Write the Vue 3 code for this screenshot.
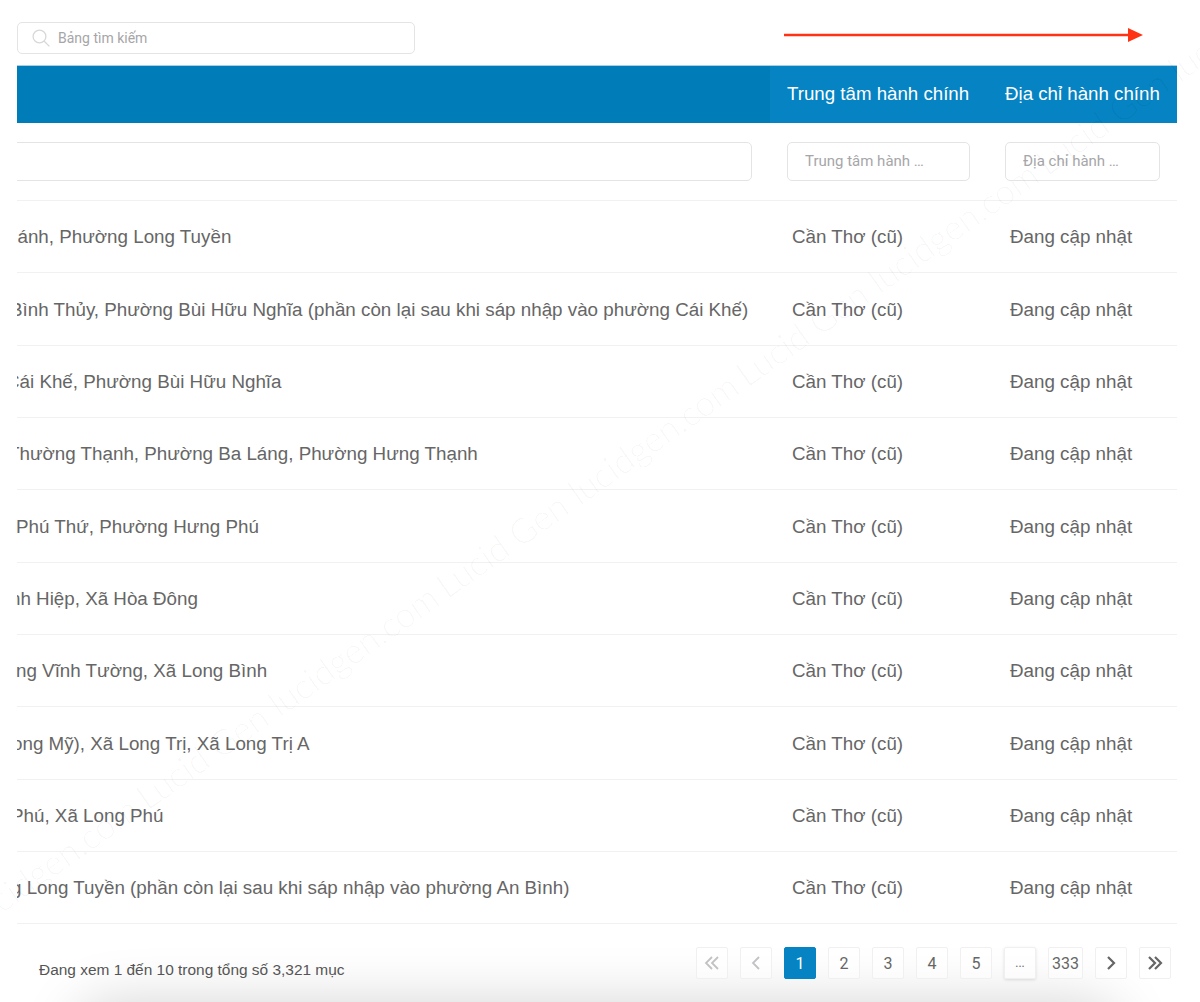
<template>
  <div class="page">
    <div class="toolbar">
      <label class="search">
        <svg class="search-icon" viewBox="0 0 18 18" width="18" height="18" fill="none">
          <circle cx="7.5" cy="7.5" r="6.4" stroke="#d8d8d8" stroke-width="1.3" />
          <line x1="12" y1="12" x2="17.4" y2="17.4" stroke="#d8d8d8" stroke-width="1.3" />
        </svg>
        <input type="text" placeholder="Bảng tìm kiếm" />
      </label>
      <svg class="arrow" viewBox="0 0 360 16" width="360" height="16">
        <line x1="0" y1="8" x2="346" y2="8" stroke="#ff3314" stroke-width="2.5" />
        <polygon points="344,1 359,8 344,15" fill="#ff3314" />
      </svg>
    </div>

    <div class="table">
      <div class="row head">
        <div class="cell first"></div>
        <div class="cell">Trung tâm hành chính</div>
        <div class="cell">Địa chỉ hành chính</div>
      </div>
      <div class="row filters">
        <div class="cell first">
          <input class="filter wide" type="text" />
        </div>
        <div class="cell"><input class="filter" type="text" placeholder="Trung tâm hành …" /></div>
        <div class="cell"><input class="filter" type="text" placeholder="Địa chỉ hành …" /></div>
      </div>
      <div v-for="item in rows" :key="item.text" class="row body">
        <div class="cell first">
          <span class="clip" :style="{ marginLeft: item.offset + 'px' }">{{ item.text }}</span>
        </div>
        <div class="cell">Cần Thơ (cũ)</div>
        <div class="cell">Đang cập nhật</div>
      </div>
    </div>

    <div class="footer">
      <div class="info">Đang xem 1 đến 10 trong tổng số 3,321 mục</div>
      <div class="pager">
        <button class="pg muted">
          <svg viewBox="0 0 16 16" width="16" height="16" fill="none" stroke="currentColor" stroke-width="1.8">
            <path d="M8 2 2 8l6 6M14 2 8 8l6 6" />
          </svg>
        </button>
        <button class="pg muted">
          <svg viewBox="0 0 16 16" width="16" height="16" fill="none" stroke="currentColor" stroke-width="1.8">
            <path d="M11 2 5 8l6 6" />
          </svg>
        </button>
        <button class="pg active">1</button>
        <button v-for="n in [2, 3, 4, 5]" :key="n" class="pg">{{ n }}</button>
        <button class="pg dots">...</button>
        <button class="pg last">333</button>
        <button class="pg">
          <svg viewBox="0 0 16 16" width="16" height="16" fill="none" stroke="currentColor" stroke-width="2.2">
            <path d="M5 2l6 6-6 6" />
          </svg>
        </button>
        <button class="pg">
          <svg viewBox="0 0 16 16" width="16" height="16" fill="none" stroke="currentColor" stroke-width="2.2">
            <path d="M2 2l6 6-6 6M8 2l6 6-6 6" />
          </svg>
        </button>
      </div>
    </div>

    <div class="bottom-shade"></div>

    <!-- watermark lies over everything -->
    <div class="watermark">
      <template v-for="n in 5" :key="n">
        <span class="mark-a">lucidgen.com</span>
        <span class="mark-b">Lucid Gen</span>
      </template>
    </div>
  </div>
</template>

<script setup>
const rows = [
  { text: 'hánh, Phường Long Tuyền', offset: -10 },
  { text: 'Bình Thủy, Phường Bùi Hữu Nghĩa (phần còn lại sau khi sáp nhập vào phường Cái Khế)', offset: -7 },
  { text: 'Cái Khế, Phường Bùi Hữu Nghĩa', offset: -11 },
  { text: 'Thường Thạnh, Phường Ba Láng, Phường Hưng Thạnh', offset: -9 },
  { text: 'Phú Thứ, Phường Hưng Phú', offset: -1 },
  { text: 'nh Hiệp, Xã Hòa Đông', offset: -7 },
  { text: 'ng Vĩnh Tường, Xã Long Bình', offset: -1 },
  { text: 'ong Mỹ), Xã Long Trị, Xã Long Trị A', offset: -5 },
  { text: 'Phú, Xã Long Phú', offset: -6 },
  { text: 'g Long Tuyền (phần còn lại sau khi sáp nhập vào phường An Bình)', offset: -6 },
]
</script>

<style>
html,
body {
  background: #fff;
}
</style>

<style scoped>
.page {
  position: relative;
  width: 1200px;
  height: 1002px;
  overflow: hidden;
  background: #fff;
  font-family: "Liberation Sans", Arial, sans-serif;
  color: #666;
}

.toolbar {
  height: 66px;
  box-sizing: border-box;
  padding: 22px 56px 0 17px;
  display: flex;
  justify-content: space-between;
  align-items: flex-start;
}

.search {
  width: 398px;
  height: 32px;
  box-sizing: border-box;
  border: 1.5px solid #e4e4e4;
  border-radius: 5px;
  display: flex;
  align-items: center;
  padding-left: 14px;
  gap: 8px;
}

.search input {
  flex: 1;
  min-width: 0;
  border: 0;
  outline: 0;
  padding: 0;
  background: transparent;
  font: 14px Roboto, sans-serif;
}

.search input::placeholder,
.filter::placeholder {
  color: #a6a6a8;
  opacity: 1;
}

.arrow {
  margin-top: 5px;
}

.table {
  width: 1160px;
  margin-left: 17px;
}

.row {
  display: grid;
  grid-template-columns: 753px 218px 189px;
}

.cell {
  display: flex;
  align-items: center;
  min-width: 0;
  white-space: nowrap;
}

.first {
  overflow: hidden;
}

.head {
  height: 57px;
  background: #0583c2;
  color: #fff;
  font-size: 18.7px;
  box-shadow: 0 -1px 0 #a9cfe5;
  padding-bottom: 1px;
  box-sizing: border-box;
}

.head .first {
  background: #007cb9;
  margin-bottom: -1px;
}

.head .cell:not(.first) {
  padding-left: 17px;
}

.filters {
  height: 78px;
  border-bottom: 1px solid #f1f1f1;
  box-sizing: border-box;
}

.filters .cell:not(.first) {
  padding-left: 17px;
}

.filter {
  width: 183px;
  height: 39px;
  box-sizing: border-box;
  border: 1.5px solid #e4e4e4;
  border-radius: 5px;
  padding: 0 17px 1px;
  outline: 0;
  background: transparent;
  font: 15px Roboto, sans-serif;
}

.filters .cell:last-child .filter {
  width: 155px;
}

.filter.wide {
  flex: none;
  width: 780px;
  margin-left: -45px;
}

.body {
  height: 72.35px;
  box-sizing: border-box;
  border-bottom: 1px solid #f1f1f1;
  font-size: 18.8px;
  padding-top: 1px;
}

.body .cell:not(.first) {
  padding-left: 22px;
}

.clip {
  flex: none;
}

.footer {
  display: flex;
  justify-content: space-between;
  align-items: center;
  position: relative;
  z-index: 1;
  margin-top: 23px;
  padding: 0 29px 0 39px;
}

.info {
  font-size: 15.45px;
  color: #555;
  margin-top: 13px;
}

.pager {
  display: flex;
  gap: 12px;
}

.pg {
  width: 32px;
  height: 32px;
  padding: 0;
  box-sizing: border-box;
  display: flex;
  align-items: center;
  justify-content: center;
  border: 1px solid #f0f0f0;
  border-radius: 2px;
  background: rgba(255, 255, 255, 0.5);
  color: #666;
  font: 16px Roboto, sans-serif;
}

.pg.muted {
  color: #c2c2c4;
}

.pg.active {
  background: #0583c2;
  border-color: #0583c2;
  color: #fff;
}

.pg.dots {
  font-size: 12px;
  box-shadow: 0 1px 3px rgba(0, 0, 0, 0.12);
}

.pg.last {
  width: 35px;
}

.bottom-shade {
  position: absolute;
  left: 85px;
  right: 90px;
  top: 1014px;
  height: 60px;
  border-radius: 30px;
  box-shadow: 0 0 55px 12px rgba(0, 0, 0, 0.17);
}

.watermark {
  position: absolute;
  left: 0;
  top: 893px;
  transform-origin: 0 100%;
  transform: rotate(-35.2deg);
  display: flex;
  white-space: nowrap;
  margin-left: -16px;
  font: 300 35px Lato, sans-serif;
  color: rgba(0, 0, 0, 0.035);
  pointer-events: none;
}

.mark-a {
  width: 205px;
  flex: none;
}

.mark-b {
  width: 162px;
  flex: none;
}
</style>
